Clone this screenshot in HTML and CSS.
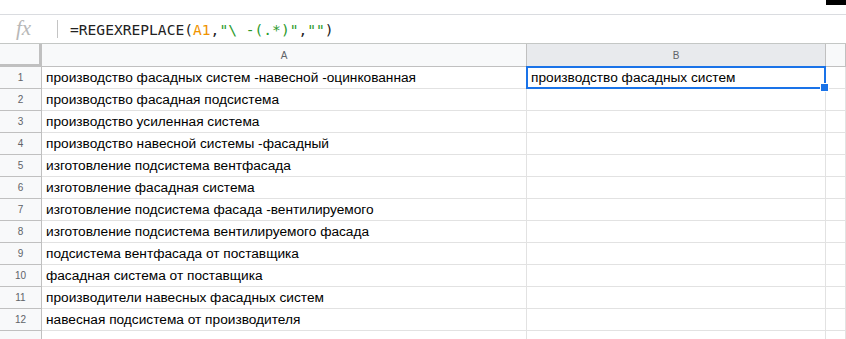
FILE: index.html
```html
<!DOCTYPE html>
<html lang="ru">
<head>
    <meta charset="UTF-8">
    <meta name="viewport" content="width=device-width, initial-scale=1.0">
    <title>Таблица</title>
    <link rel="stylesheet" href="styles.css">
</head>
<body>
    <!-- остаток панели инструментов -->
    <div class="toolbar">
        <span class="tb-mark"></span>
    </div>

    <!-- строка формул -->
    <div class="formula-bar">
        <span class="fx">fx</span>
        <span class="fx-sep"></span>
        <span class="formula">=REGEXREPLACE(<span class="ref">A1</span>,<span class="str">"\ -(.*)"</span>,<span class="str">""</span>)</span>
    </div>

    <!-- таблица -->
    <div class="sheet">
        <div class="row head">
            <div class="corner"></div>
            <div class="col-a col-head">A</div>
            <div class="col-b col-head active">B</div>
            <div class="col-c col-head"></div>
        </div>
        <div class="row">
            <div class="num">1</div>
            <div class="col-a cell">производство фасадных систем -навесной -оцинкованная</div>
            <div class="col-b cell selected">производство фасадных систем<span class="handle"></span></div>
            <div class="col-c cell"></div>
        </div>
        <div class="row">
            <div class="num">2</div>
            <div class="col-a cell">производство фасадная подсистема</div>
            <div class="col-b cell"></div>
            <div class="col-c cell"></div>
        </div>
        <div class="row">
            <div class="num">3</div>
            <div class="col-a cell">производство усиленная система</div>
            <div class="col-b cell"></div>
            <div class="col-c cell"></div>
        </div>
        <div class="row">
            <div class="num">4</div>
            <div class="col-a cell">производство навесной системы -фасадный</div>
            <div class="col-b cell"></div>
            <div class="col-c cell"></div>
        </div>
        <div class="row">
            <div class="num">5</div>
            <div class="col-a cell">изготовление подсистема вентфасада</div>
            <div class="col-b cell"></div>
            <div class="col-c cell"></div>
        </div>
        <div class="row">
            <div class="num">6</div>
            <div class="col-a cell">изготовление фасадная система</div>
            <div class="col-b cell"></div>
            <div class="col-c cell"></div>
        </div>
        <div class="row">
            <div class="num">7</div>
            <div class="col-a cell">изготовление подсистема фасада -вентилируемого</div>
            <div class="col-b cell"></div>
            <div class="col-c cell"></div>
        </div>
        <div class="row">
            <div class="num">8</div>
            <div class="col-a cell">изготовление подсистема вентилируемого фасада</div>
            <div class="col-b cell"></div>
            <div class="col-c cell"></div>
        </div>
        <div class="row">
            <div class="num">9</div>
            <div class="col-a cell">подсистема вентфасада от поставщика</div>
            <div class="col-b cell"></div>
            <div class="col-c cell"></div>
        </div>
        <div class="row">
            <div class="num">10</div>
            <div class="col-a cell">фасадная система от поставщика</div>
            <div class="col-b cell"></div>
            <div class="col-c cell"></div>
        </div>
        <div class="row">
            <div class="num">11</div>
            <div class="col-a cell">производители навесных фасадных систем</div>
            <div class="col-b cell"></div>
            <div class="col-c cell"></div>
        </div>
        <div class="row">
            <div class="num">12</div>
            <div class="col-a cell">навесная подсистема от производителя</div>
            <div class="col-b cell"></div>
            <div class="col-c cell"></div>
        </div>
        <div class="row">
            <div class="num"></div>
            <div class="col-a cell"></div>
            <div class="col-b cell"></div>
            <div class="col-c cell"></div>
        </div>
    </div>
</body>
</html>
```

FILE: styles.css
```css
body {
    margin: 0;
    font-family: "Liberation Sans", Arial, sans-serif;
    background-color: #fff;
    overflow: hidden;
}
.toolbar {
    height: 14px;
    border-bottom: 1px solid #dadce0;
    display: flex;
    justify-content: flex-end;
}
.tb-mark {
    width: 20px;
    height: 5px;
    background-color: #000;
}
.formula-bar {
    height: 28px;
    display: flex;
    align-items: center;
    border-bottom: 1px solid #c4c7c5;
}
.fx {
    width: 42px;
    padding-left: 16px;
    box-sizing: border-box;
    font-family: "Liberation Serif", serif;
    font-style: italic;
    font-size: 21px;
    color: #b8b8b8;
    line-height: 28px;
    margin-top: -2px;
}
.fx-sep {
    width: 1px;
    height: 18px;
    background-color: #c4c4c4;
    margin-left: 15px;
    margin-right: 12px;
}
.formula {
    font-family: "DejaVu Sans Mono", monospace;
    font-size: 14.6px;
    color: #222;
    padding-top: 1px;
}
.ref {
    color: #f09300;
}
.str {
    color: #2b9a2b;
}
.sheet {
    display: flex;
    flex-direction: column;
}
.row {
    display: flex;
    height: 22px;
}
.head {
    height: 23px;
}
.corner {
    width: 39px;
    height: 20px;
    background-color: #f8f9fa;
    border-right: 3px solid #c0c0c0;
    border-bottom: 3px solid #c0c0c0;
}
.col-a {
    width: 484px;
}
.col-b {
    width: 298px;
}
.col-c {
    flex: 1;
}
.col-head {
    background-color: #f8f9fa;
    border-right: 1px solid #c0c0c0;
    border-bottom: 1px solid #c0c0c0;
    font-size: 10px;
    color: #5f6368;
    text-align: center;
    line-height: 24px;
}
.col-head.active {
    background-color: #e8eaed;
}
.num {
    width: 41px;
    flex: none;
    background-color: #f8f9fa;
    border-right: 1px solid #c0c0c0;
    border-bottom: 1px solid #c0c0c0;
    font-size: 10px;
    color: #5f6368;
    text-align: center;
    line-height: 21px;
}
.cell {
    border-right: 1px solid #e2e2e2;
    border-bottom: 1px solid #e2e2e2;
    font-size: 13.7px;
    color: #000;
    line-height: 22px;
    height: 21px;
    padding-left: 4px;
    white-space: nowrap;
    overflow: hidden;
    box-sizing: content-box;
}
.col-a.cell {
    width: 480px;
}
.col-b.cell {
    width: 294px;
}
.selected {
    position: relative;
    overflow: visible;
}
.selected::before {
    content: "";
    position: absolute;
    left: -1px;
    top: -1px;
    right: -1px;
    bottom: -1px;
    border: 2px solid #1a73e8;
}
.handle {
    position: absolute;
    right: -4px;
    bottom: -4px;
    width: 7px;
    height: 7px;
    background-color: #1a73e8;
    border: 1px solid #fff;
    z-index: 2;
}
```
